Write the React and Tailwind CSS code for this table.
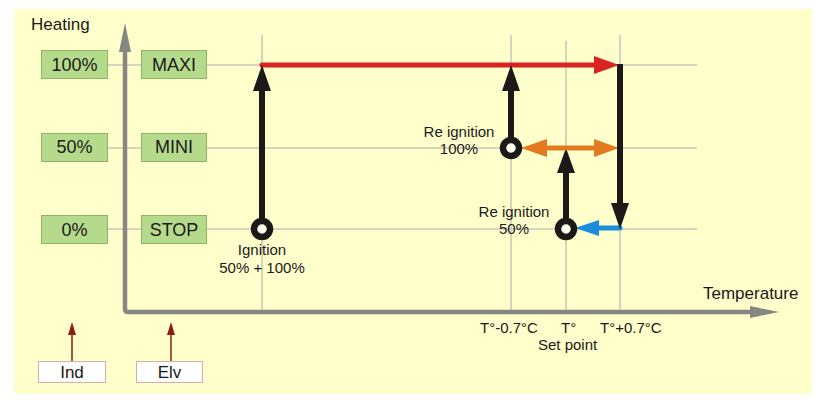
import React from "react";

const font = { fontFamily: '"Liberation Sans", Arial, sans-serif' };

function GreenBox({ children }) {
  return (
    <div className="h-[29px] flex items-center justify-center bg-[#b6da8c] border border-[#8fb466] text-[18px] leading-none text-[#1a1a1a]">
      {children}
    </div>
  );
}

function WhiteBox({ w, children }) {
  return (
    <div
      className={`h-[22px] flex items-center justify-center bg-white border border-[#d6b0a6] text-[17px] leading-none text-[#1a1a1a] ${w}`}
    >
      {children}
    </div>
  );
}

function Chart() {
  const grid = "#c9c8bc";
  const axis = "#878782";
  const blk = "#1c1a18";
  return (
    <svg
      className="absolute inset-0"
      width="798"
      height="385"
      viewBox="14 9 798 385"
    >
      {/* horizontal grid lines */}
      {[65, 148, 229].map((y) => (
        <g key={y}>
          <line x1="108" y1={y} x2="141" y2={y} stroke={grid} strokeWidth="1.6" />
          <line x1="207" y1={y} x2="697" y2={y} stroke={grid} strokeWidth="1.6" />
        </g>
      ))}
      {/* vertical grid lines */}
      <line x1="262" y1="35" x2="262" y2="311" stroke={grid} strokeWidth="1.6" />
      <line x1="511" y1="35" x2="511" y2="311" stroke={grid} strokeWidth="1.6" />
      <line x1="566" y1="41" x2="566" y2="311" stroke={grid} strokeWidth="1.6" />
      <line x1="620" y1="35" x2="620" y2="311" stroke={grid} strokeWidth="1.6" />

      {/* axes */}
      <path
        d="M125 50 L125 309 Q125 312 128 312 L752 312"
        fill="none"
        stroke={axis}
        strokeWidth="4.5"
      />
      <polygon points="125,23 131,52 119,52" fill={axis} />
      <polygon points="779,312 750,306 750,318" fill={axis} />

      {/* red arrow */}
      <line x1="262" y1="65" x2="597" y2="65" stroke="#d82321" strokeWidth="5" strokeLinecap="round" />
      <polygon points="619,65 594,56 594,74" fill="#d82321" />

      {/* black arrows */}
      <line x1="262" y1="229" x2="262" y2="88" stroke={blk} strokeWidth="6" />
      <polygon points="262,65 253,91 271,91" fill={blk} />

      <line x1="511" y1="148" x2="511" y2="88" stroke={blk} strokeWidth="6" />
      <polygon points="511,65 502,91 520,91" fill={blk} />

      <line x1="566" y1="229" x2="566" y2="170" stroke={blk} strokeWidth="6" />
      <polygon points="566,148 557,173 575,173" fill={blk} />

      {/* orange double arrow */}
      <line x1="545" y1="148" x2="597" y2="148" stroke="#e27a1f" strokeWidth="5" />
      <polygon points="521,148 547,139 547,157" fill="#e27a1f" />
      <polygon points="619,148 594,139 594,157" fill="#e27a1f" />

      {/* blue arrow */}
      <line x1="596" y1="228" x2="620" y2="228" stroke="#1a8edb" strokeWidth="5" strokeLinecap="round" />
      <polygon points="575,228 599,220 599,236" fill="#1a8edb" />

      {/* black down arrow */}
      <line x1="620" y1="64" x2="620" y2="206" stroke={blk} strokeWidth="6" />
      <polygon points="620,229 611,203 629,203" fill={blk} />

      {/* circles */}
      {[
        [262, 229],
        [511, 148],
        [566, 229],
      ].map(([cx, cy]) => (
        <circle key={cx} cx={cx} cy={cy} r="8" fill="#fffff0" stroke={blk} strokeWidth="6.5" />
      ))}

      {/* dark red small arrows */}
      <line x1="72" y1="334" x2="72" y2="361" stroke="#8a1c14" strokeWidth="1.5" />
      <polygon points="72,322 68,335 76,335" fill="#8a1c14" />
      <line x1="171" y1="334" x2="171" y2="361" stroke="#8a1c14" strokeWidth="1.5" />
      <polygon points="171,322 167,335 175,335" fill="#8a1c14" />
    </svg>
  );
}

export default function App() {
  return (
    <div className="w-[820px] h-[402px] bg-white pt-[9px] pl-[14px]" style={font}>
      <div className="relative w-[798px] h-[385px] bg-[#ffffcc] text-[#1a1a1a]">
        <Chart />

        {/* flow content: title, level boxes, source boxes */}
        <div className="relative flex flex-col pt-[7px]">
          <div className="pl-[17px] text-[17px] leading-none h-[17px]">Heating</div>

          <div className="mt-[17px] pl-[27px] grid grid-cols-[67px_66px] gap-x-[33px] gap-y-[53.5px] w-max">
            <GreenBox>100%</GreenBox>
            <GreenBox>MAXI</GreenBox>
            <GreenBox>50%</GreenBox>
            <GreenBox>MINI</GreenBox>
            <GreenBox>0%</GreenBox>
            <GreenBox>STOP</GreenBox>
          </div>

          <div className="mt-[117px] pl-[24px] flex gap-[30px]">
            <WhiteBox w="w-[68px]">Ind</WhiteBox>
            <WhiteBox w="w-[67px]">Elv</WhiteBox>
          </div>
        </div>

        {/* diagram annotations placed on the chart canvas */}
        <div className="absolute left-[188px] top-[232px] w-[120px] text-center text-[15px] leading-[18px]">
          Ignition
          <br />
          50% + 100%
        </div>
        <div className="absolute left-[395px] top-[114px] w-[100px] text-center text-[15px] leading-[17px]">
          Re ignition
          <br />
          100%
        </div>
        <div className="absolute left-[450px] top-[194px] w-[100px] text-center text-[15px] leading-[17px]">
          Re ignition
          <br />
          50%
        </div>

        <div className="absolute left-[689px] top-[276px] text-[17px] leading-none">Temperature</div>
        <div className="absolute left-[466px] top-[311px] text-[15px] leading-none">T°-0.7°C</div>
        <div className="absolute left-[547px] top-[311px] text-[15px] leading-none">T°</div>
        <div className="absolute left-[586px] top-[311px] text-[15px] leading-none">T°+0.7°C</div>
        <div className="absolute left-[524px] top-[328px] text-[15px] leading-none">Set point</div>
      </div>
    </div>
  );
}
